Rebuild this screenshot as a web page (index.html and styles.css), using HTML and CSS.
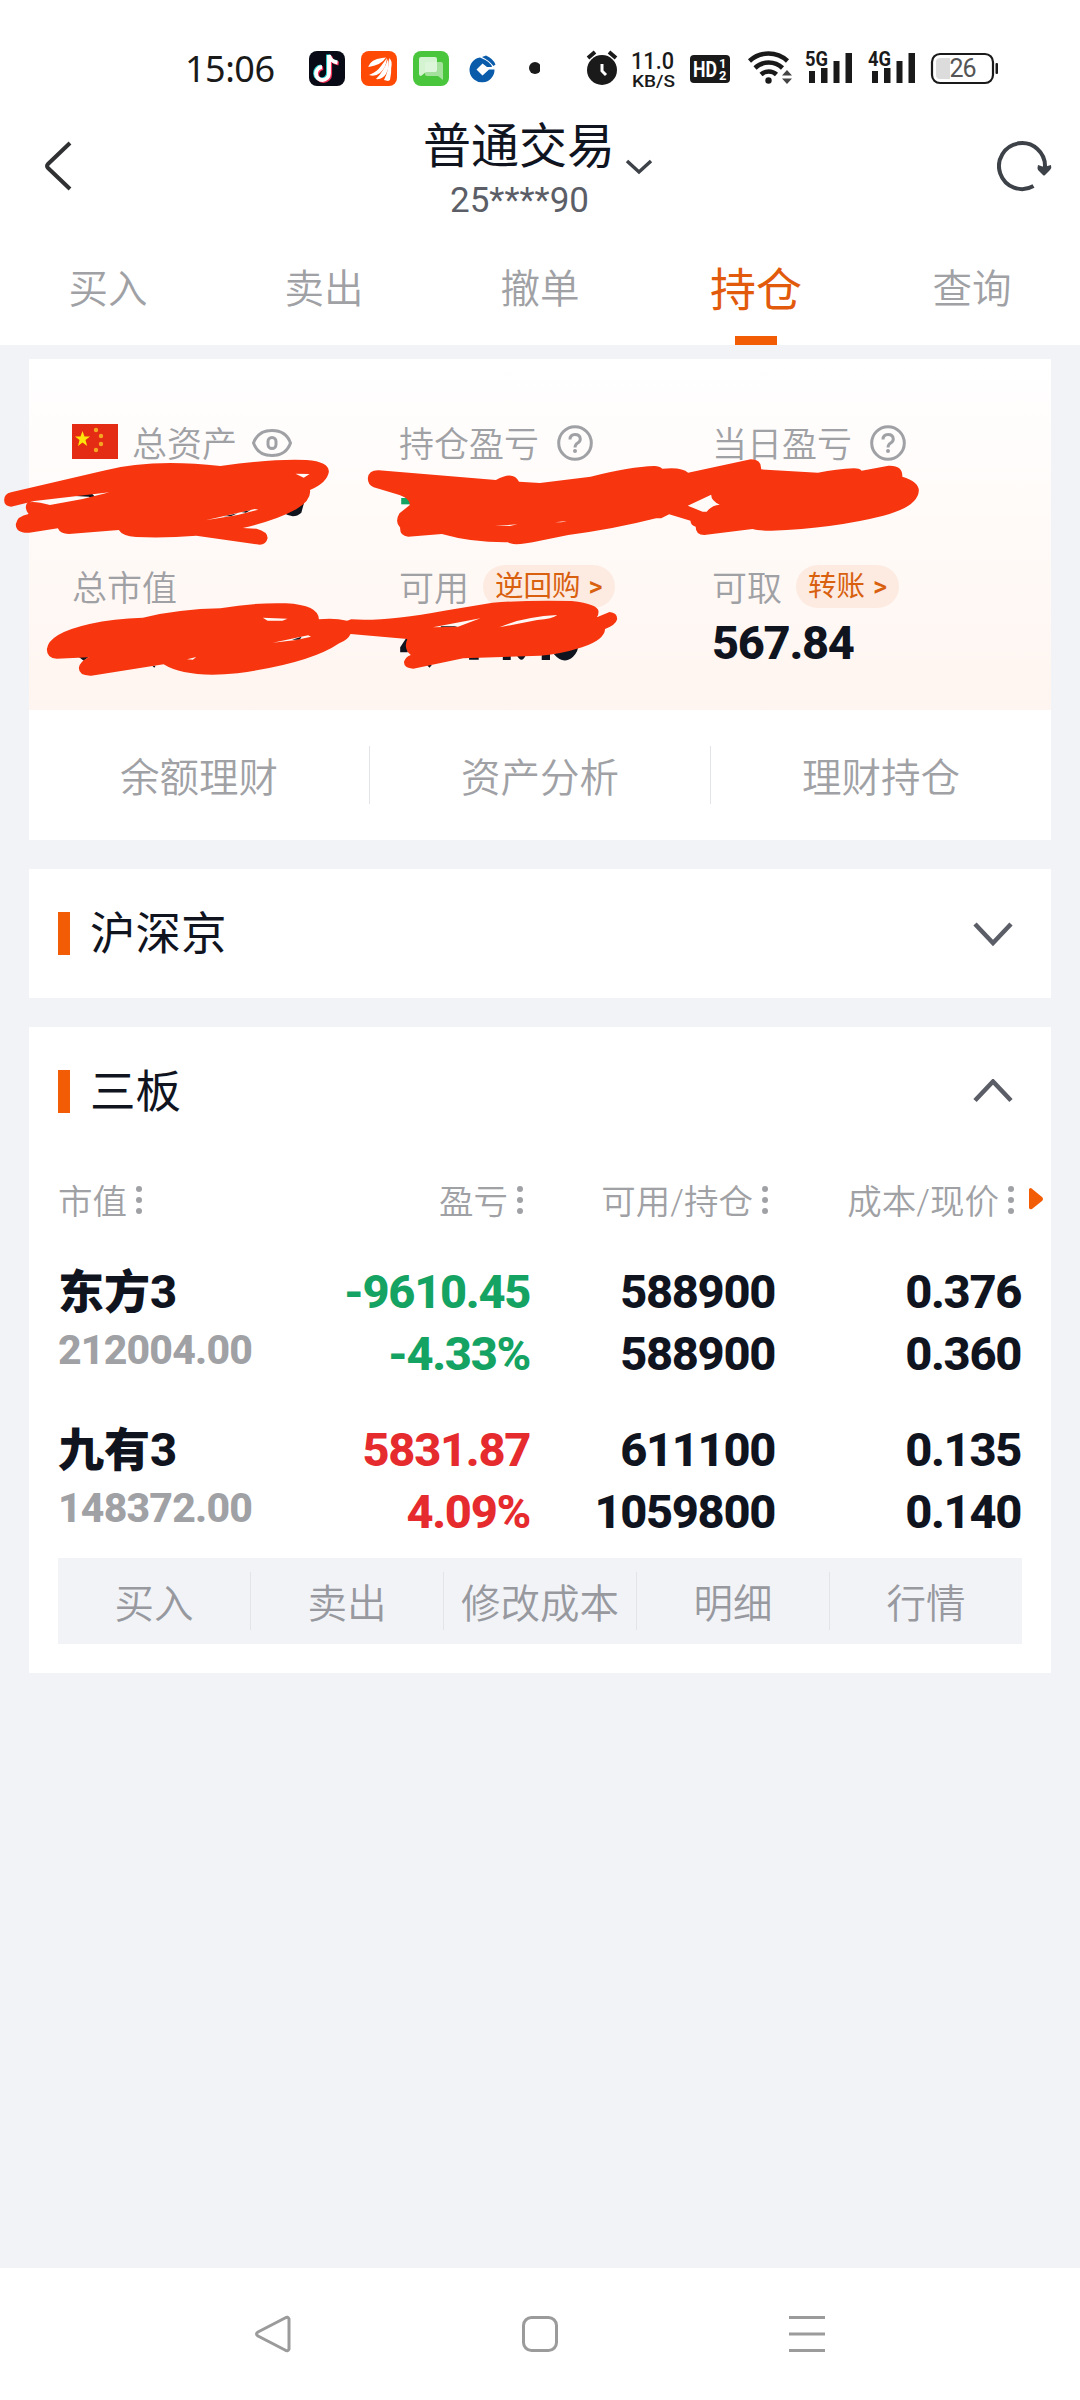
FILE: index.html
```html
<!DOCTYPE html>
<html lang="zh-CN">
<head>
    <meta charset="UTF-8">
    <meta name="viewport" content="width=device-width, initial-scale=1.0">
    <title>普通交易</title>
    <link rel="stylesheet" href="styles.css">
</head>
<body>
    <div class="screen">
        <div class="status-bar">
            <span class="time">15:06</span>
            <svg class="status-apps" width="240" height="50" viewBox="300 43 240 50">
                <rect x="309" y="51" width="36" height="35" rx="8" fill="#080a16"/>
                <g fill="none" stroke-width="3.800">
                    <path d="M329 55v18.500a6.500 6.500 0 1 1-7-6.500M329 55q1 6.500 8.500 7.500" stroke="#25d8dc" transform="translate(-1 -.5)"/>
                    <path d="M329 55v18.500a6.500 6.500 0 1 1-7-6.500M329 55q1 6.500 8.500 7.500" stroke="#f4325a" transform="translate(1.200 1)"/>
                    <path d="M329 55v18.500a6.500 6.500 0 1 1-7-6.500M329 55q1 6.500 8.500 7.500" stroke="#fff"/>
                </g>
                <rect x="361" y="51" width="36" height="35" rx="8" fill="#ff4a05"/>
                <g fill="#fff">
                    <path d="M368 67q3-8 14-9l4-.5q-5 8-18 9.500z"/>
                    <path d="M369 75q8-3 12-9 3-4 6-8-1 10-7 15-5 4-11 2z"/>
                    <path d="M376 79q8-8 12-20 2 8-2 15-4 6-10 5z"/>
                    <path d="M384 80q5-10 5-21 4 6 1 21l-2 1z"/>
                    <path d="M389 58q4 3 2 10l-1-1z"/>
                </g>
                <rect x="413" y="51" width="36" height="35" rx="8" fill="#4ac63c"/>
                <path d="M427 62h14q2 0 2 2v16l-5-4h-11q-2 0-2-2V64q0-2 2-2z" fill="#a4e19c"/>
                <path d="M421 57h14q2 0 2 2v11q0 2-2 2h-9l-5 4q-2 0-2-2V59q0-2 2-2z" fill="#e3f7e1" fill-opacity=".9"/>
                <path d="M480 57.500a12.500 12.500 0 1 0 14.500 12H489l-6.500 6-6-6 6-6 4.500 3.500h5q-1-5-12-9.500z" fill="#0a5cab"/>
                <path d="M482 57l4-1.500q7 3 9.500 9l-2 1.500q-5-6-11.500-9z" fill="#0a5cab"/>
                <circle cx="535" cy="68" r="6" fill="#1a1a1a"/>
            </svg>
            <svg class="status-icons" width="420" height="50" viewBox="580 43 420 50" fill="#1a1a1a">
                <circle cx="602" cy="70" r="15"/>
                <path d="M588 58l7-6M609 52l7 6" stroke="#1a1a1a" stroke-width="4"/>
                <path d="M602 64v7l4 4" fill="none" stroke="#fff" stroke-width="3"/>
                <text x="631" y="69" font-size="23" font-weight="500" textLength="43" lengthAdjust="spacingAndGlyphs">11.0</text>
                <text x="632" y="86.500" font-size="16.500" font-weight="500" textLength="43" lengthAdjust="spacingAndGlyphs">KB/S</text>
                <rect x="690" y="55" width="40" height="28" rx="4"/>
                <text x="693" y="77" font-size="22" font-weight="700" fill="#fff" textLength="24" lengthAdjust="spacingAndGlyphs">HD</text>
                <text x="719" y="68" font-size="13" font-weight="700" fill="#fff">1</text>
                <text x="719" y="80" font-size="13" font-weight="700" fill="#fff">2</text>
                <g fill="none" stroke="#1a1a1a" stroke-width="4.500">
                    <path d="M749.500 61a28 28 0 0 1 38 0M755 68a20 20 0 0 1 27.500 0M761 74.500a11.500 11.500 0 0 1 15.500 0"/>
                </g>
                <circle cx="768.500" cy="80.500" r="3.200"/>
                <path d="M782 75.500l5-5.500 5 5.500zM782 78.500l5 5.500 5-5.500z" fill="#444"/>
                <text x="805" y="66" font-size="21" font-weight="700" textLength="23" lengthAdjust="spacingAndGlyphs">5G</text>
                <path d="M809 71h6v12h-6zM821 68h6.500v15H821zM833.500 61h6v22h-6zM845.500 53h6.500v30h-6.500z"/>
                <text x="868" y="66" font-size="21" font-weight="700" textLength="23" lengthAdjust="spacingAndGlyphs">4G</text>
                <path d="M872 71h6v12h-6zM884 68h6.500v15H884zM896.500 61h6v22h-6zM908.500 53h6.500v30h-6.500z"/>
                <rect x="932" y="54" width="61" height="29" rx="8" fill="none" stroke="#1a1a1a" stroke-width="2.200"/>
                <path d="M950 58v21h-10q-4 0-4-4V62q0-4 4-4z" fill="#dcdcdc"/>
                <rect x="995.500" y="63" width="2.500" height="11" rx="1"/>
                <text x="949.500" y="77" font-size="25" fill="#555" textLength="27">26</text>
            </svg>
        </div>

        <header class="header">
            <svg class="back" width="30" height="52" viewBox="0 0 30 52">
                <path d="M27 3L5 24q-2 2 0 4l22 21" fill="none" stroke="#303133" stroke-width="4"/>
            </svg>
            <div class="account">
                <div class="account-name">
                    <span>普通交易</span>
                    <svg class="account-arrow" width="28" height="16" viewBox="0 0 28 16">
                        <path d="M2 2l12 11L26 2" fill="none" stroke="#3d4148" stroke-width="3.500"/>
                    </svg>
                </div>
                <div class="account-no">25****90</div>
            </div>
            <svg class="refresh" width="56" height="52" viewBox="0 0 56 52">
                <path d="M36.500 46A23 23 0 1 1 48 27" fill="none" stroke="#3d4148" stroke-width="4"/>
                <path d="M41 25l6 2 7-2q1 3-1 5l-5 5q-1 1-2 0l-5-5q-1-2 0-5z" fill="#3d4148"/>
            </svg>
        </header>

        <nav class="tabs">
            <div class="tab">买入</div>
            <div class="tab">卖出</div>
            <div class="tab">撤单</div>
            <div class="tab active">持仓</div>
            <div class="tab">查询</div>
        </nav>

        <main class="content">
            <section class="card assets">
                <div class="summary">
                    <div class="item">
                        <div class="label">
                            <svg class="flag" width="46" height="35" viewBox="0 0 46 35">
                                <rect width="46" height="35" fill="#e42c14"/>
                                <path d="M10.500 7l2 5.500h5.500l-4.500 3.500 1.700 6-4.700-3.500L6 22l1.500-6L3 12.500h5.500z" fill="#ffe60a"/>
                                <g fill="#f5a623"><circle cx="24" cy="6" r="2.200"/><circle cx="29" cy="12" r="2.200"/><circle cx="29" cy="20" r="2.200"/><circle cx="24" cy="26" r="2.200"/></g>
                            </svg>
                            <span>总资产</span>
                            <svg class="eye" width="42" height="30" viewBox="0 0 42 30" fill="none" stroke="#9fa1a5" stroke-width="3">
                                <path d="M2.500 15Q7 2.500 21 2.500T39.500 15Q35 27.500 21 27.500T2.500 15z"/>
                                <rect x="17" y="9.500" width="8" height="11" rx="4"/>
                            </svg>
                        </div>
                    </div>
                    <div class="item">
                        <div class="label">
                            <span>持仓盈亏</span>
                            <svg class="help" width="36" height="36" viewBox="0 0 36 36" fill="none" stroke="#9fa1a5" stroke-width="3">
                                <circle cx="18" cy="18" r="16.300"/>
                                <path d="M13 14.500q0-5 5-5t5.300 4.500q0 2.500-2.600 4T18 22.500"/>
                                <circle cx="18" cy="26" r="2" fill="#9fa1a5" stroke="none"/>
                            </svg>
                        </div>
                    </div>
                    <div class="item">
                        <div class="label">
                            <span>当日盈亏</span>
                            <svg class="help" width="36" height="36" viewBox="0 0 36 36" fill="none" stroke="#9fa1a5" stroke-width="3">
                                <circle cx="18" cy="18" r="16.300"/>
                                <path d="M13 14.500q0-5 5-5t5.300 4.500q0 2.500-2.600 4T18 22.500"/>
                                <circle cx="18" cy="26" r="2" fill="#9fa1a5" stroke="none"/>
                            </svg>
                        </div>
                    </div>
                    <div class="item">
                        <div class="label"><span>总市值</span></div>
                    </div>
                    <div class="item">
                        <div class="label"><span>可用</span><span class="pill">逆回购 <b>&gt;</b></span></div>
                    </div>
                    <div class="item">
                        <div class="label"><span>可取</span><span class="pill">转账 <b>&gt;</b></span></div>
                        <div class="value">567.84</div>
                    </div>
                </div>
                <div class="links">
                    <div class="link">余额理财</div>
                    <div class="link">资产分析</div>
                    <div class="link">理财持仓</div>
                </div>
            </section>

            <section class="card market">
                <div class="market-head">
                    <h2>沪深京</h2>
                    <svg width="40" height="26" viewBox="0 0 40 26"><path d="M2 3l18 19L38 3" fill="none" stroke="#5b5e66" stroke-width="4.500"/></svg>
                </div>
            </section>

            <section class="card market">
                <div class="market-head">
                    <h2>三板</h2>
                    <svg width="40" height="26" viewBox="0 0 40 26"><path d="M2 21.500L20 2.500l18 19" fill="none" stroke="#5b5e66" stroke-width="4.500"/></svg>
                </div>
                <div class="row columns">
                    <div class="col">市值<i class="dots"></i></div>
                    <div class="col">盈亏<i class="dots"></i></div>
                    <div class="col">可用/持仓<i class="dots"></i></div>
                    <div class="col">成本/现价<i class="dots"></i></div>
                    <svg class="more" width="16" height="24" viewBox="0 0 16 24"><path d="M1 2q1-1 2-1l11 9q2 2 0 4L4 22q-2 1-3-1z" fill="#f25c05"/></svg>
                </div>
                <div class="row stock">
                    <div class="cell"><div class="name">东方<span>3</span></div><div class="amount">212004.00</div></div>
                    <div class="cell down"><div>-9610.45</div><div>-4.33%</div></div>
                    <div class="cell"><div>588900</div><div>588900</div></div>
                    <div class="cell"><div>0.376</div><div>0.360</div></div>
                </div>
                <div class="row stock">
                    <div class="cell"><div class="name">九有<span>3</span></div><div class="amount">148372.00</div></div>
                    <div class="cell up"><div>5831.87</div><div>4.09%</div></div>
                    <div class="cell"><div>611100</div><div>1059800</div></div>
                    <div class="cell"><div>0.135</div><div>0.140</div></div>
                </div>
                <div class="actions">
                    <div class="action">买入</div>
                    <div class="action">卖出</div>
                    <div class="action">修改成本</div>
                    <div class="action">明细</div>
                    <div class="action">行情</div>
                </div>
            </section>
        </main>

        <footer class="nav-bar">
            <svg width="38" height="38" viewBox="0 0 38 38"><path d="M31 3q3-2 4 1v30q-1 3-4 1L4 21q-3-2 0-4z"/></svg>
            <svg width="38" height="38" viewBox="0 0 38 38"><rect x="2.500" y="2.500" width="33" height="33" rx="8"/></svg>
            <svg width="38" height="38" viewBox="0 0 38 38"><path d="M1 2.500h36M1 19h36M1 35.500h36"/></svg>
        </footer>

        <!-- marker strokes over the private amounts -->
        <svg class="marker" width="1080" height="300" viewBox="0 0 1080 300">
            <g transform="scale(.34439 .33333)">
                <g fill="#10141f">
                    <path d="M218 288q25-12 50-6l12 13-10 5-12-10z"/>
                    <path d="M825 340q28 18 50-2l8-30-40 15zM650 349l40-9-20 9zM700 336l28-6-14 8z"/>
                    <path d="M228 770h30l-15 12zM442 797l10 0-4 6zM848 719l28-9-6 9z"/>
                    <path d="M1280 679h48l-18 5h-30zM1162 757v-15l22-35v50zM1240 795h14l-7 8zM1362 765h28v14h-28zM1460 765h23v15h-23zM1500 765h27q-12 28-27 0zM1573 760h24v20h-24zM1608 762q28 34 56 8 16-15 16-40z"/>
                </g>
                <path d="M1165 294h30v19h-30z" fill="#14a362"/>
                <g fill="#f7350f" fill-rule="evenodd">
                    <path d="M12 300Q12 282 32 277L300 212Q440 175 640 198Q800 175 890 180Q955 185 955 215Q950 248 900 270Q905 300 860 328Q800 362 705 384L745 386Q778 395 777 415Q772 438 745 433L570 407Q480 415 395 411Q355 408 345 390L200 402Q175 402 168 385L85 398Q45 400 46 372Q50 348 83 342Q70 325 78 310Q92 300 145 315L240 297L318 277L100 303L32 320Q12 318 12 300z
                        M858 221L899 222L882 233zM597 361L740 327L750 329L690 345z"/>
                    <path d="M1068 235Q1070 210 1100 211L1440 240Q1490 210 1507 245L1568 249L1715 230Q1830 200 1900 198Q1915 198 1923 206Q1980 200 1998 218L2180 178Q2212 178 2210 208L2375 218Q2430 207 2480 205Q2495 205 2502 212L2580 197Q2622 195 2620 230Q2668 245 2668 272Q2665 320 2565 347Q2420 385 2240 392Q2200 392 2185 387L2045 405Q2020 405 2020 380Q2005 375 2005 362L1943 343L1920 355L1905 355Q1780 388 1650 405L1568 422Q1490 440 1475 427Q1370 428 1283 402L1185 410Q1160 408 1162 383Q1145 365 1160 340L1190 315Q1190 295 1160 285L1085 262Q1068 255 1068 235z
                        M1997 317L2065 284Q2065 302 2090 314Q2066 316 2052 335L2040 335zM1437 378L1503 373L1480 378zM1612 367L1645 363L1630 367z"/>
                    <path d="M136 748Q140 700 260 672Q330 655 415 653Q520 627 640 625Q740 607 830 610Q925 615 926 658Q970 653 1008 662L1020 658Q1120 665 1290 632L1430 608Q1530 600 1660 603Q1738 612 1738 635Q1738 645 1733 652L1770 636Q1793 638 1792 658Q1788 675 1757 687Q1755 720 1690 742Q1620 765 1568 767L1345 775L1200 806Q1172 805 1173 785Q1178 770 1193 765Q1170 745 1183 717L1018 702Q1010 720 985 730Q900 790 690 820Q540 835 475 793L265 827Q228 828 229 803Q232 785 258 772L165 776Q136 775 136 748z
                        M763 653L835 656L820 662L777 662zM792 728L895 706L903 710L860 720zM543 778L570 771L560 779zM1257 682L1395 655L1330 680zM1450 682Q1520 650 1618 645Q1605 657 1560 660z"/>
                </g>
            </g>
        </svg>
    </div>
</body>
</html>
```
FILE: styles.css
```css
* {
    box-sizing: border-box;
}
body {
    margin: 0;
    font-family: Roboto, "Noto Sans CJK SC", sans-serif;
    background: #f2f3f7;
    color: #10141f;
}
svg {
    display: block;
    flex: none;
}
.screen {
    position: relative;
    width: 1080px;
    height: 2400px;
    display: flex;
    flex-direction: column;
}

/* status bar */
.status-bar {
    display: flex;
    align-items: flex-start;
    height: 110px;
    padding: 44px 0 0 185px;
    background: #fff;
}
.time {
    width: 115px;
    font-family: "Noto Sans", sans-serif;
    font-size: 36px;
    line-height: 50px;
    letter-spacing: -0.5px;
    color: #1a1a1a;
}
.status-apps,
.status-icons {
    margin-top: -1px;
}
.status-icons {
    margin-left: 40px;
}

/* title */
.header {
    display: flex;
    align-items: flex-start;
    height: 130px;
    padding: 6px 27px 0 43px;
    background: #fff;
}
.back {
    margin-top: 24px;
}
.refresh {
    margin: 24px 0 0 auto;
}
.account {
    width: 240px;
    margin-left: 350px;
}
.account-name {
    display: flex;
    font-size: 48px;
    line-height: 62px;
}
.account-arrow {
    margin: 43px 0 0 10px;
}
.account-no {
    padding-left: 27px;
    font-size: 35px;
    line-height: 46px;
    color: #5b5e66;
}

/* tabs */
.tabs {
    display: flex;
    height: 105px;
    background: #fff;
}
.tab {
    flex: 1;
    display: flex;
    flex-direction: column;
    align-items: center;
    padding-top: 20px;
    font-size: 39.500px;
    line-height: 60px;
    color: #9fa1a5;
    font-weight: 350;
}
.tab.active {
    font-size: 46px;
    color: #e25a0c;
    font-weight: 400;
}
.tab.active::after {
    content: "";
    width: 42px;
    height: 9px;
    margin-top: 16px;
    background: #f25c05;
}

/* cards */
.content {
    flex: 1;
    display: flex;
    flex-direction: column;
    gap: 29px;
    padding: 14px 29px 0;
}
.card {
    background: #fff;
}
.summary {
    display: grid;
    grid-template-columns: 327px 313px 1fr;
    grid-template-rows: 144px 144px;
    height: 351px;
    padding: 62px 0 0 43px;
    background: linear-gradient(#fff, #fff5f0);
}
.label {
    display: flex;
    align-items: center;
    height: 44px;
    font-size: 35px;
    font-weight: 350;
    color: #9fa1a5;
}
.label > span:not(.pill) {
    margin-top: -4px;
}
.flag {
    margin: -4px 14px 0 0;
}
.eye {
    margin-left: 14px;
}
.help {
    margin-left: 18px;
}
.pill {
    height: 43px;
    margin: -2px 0 0 14px;
    padding: 0 12px;
    border-radius: 22px;
    background: #fdebe1;
    color: #d8600f;
    font-size: 28.500px;
    font-weight: 400;
    line-height: 44px;
    white-space: nowrap;
}
.pill b {
    margin-left: 1px;
    font-size: 27px;
    font-weight: 500;
}
.value {
    margin-top: 4px;
    font-size: 47px;
    font-weight: 800;
    line-height: 60px;
    letter-spacing: -1.300px;
}
.links {
    display: flex;
    height: 130px;
    padding: 36px 0;
}
.link {
    flex: 1;
    text-align: center;
    font-size: 39.500px;
    font-weight: 350;
    line-height: 65px;
    color: #9fa1a5;
}
.link + .link {
    border-left: 1px solid #e3e4e8;
}

/* holdings */
.market {
    padding: 0 29px;
}
.market-head {
    display: flex;
    align-items: center;
    justify-content: space-between;
    height: 129px;
    padding-right: 9px;
}
.market-head h2 {
    display: flex;
    align-items: center;
    margin: 0;
    font-size: 45.500px;
    font-weight: 400;
    line-height: 66px;
    padding-top: 3px;
}
.market-head h2::before {
    content: "";
    width: 12px;
    height: 43px;
    margin: -4px 20px 0 0;
    background: #f25c05;
}
.row {
    display: grid;
    grid-template-columns: 228px 244px 245px 246px;
}
.columns {
    position: relative;
    height: 105px;
    padding-top: 22px;
    font-size: 34.500px;
    font-weight: 350;
    line-height: 49px;
    color: #9fa1a5;
}
.col {
    display: flex;
    justify-content: flex-end;
    padding-right: 7px;
}
.col:first-child {
    justify-content: flex-start;
}
.dots {
    width: 6px;
    height: 6px;
    margin: 8px 0 0 9px;
    border-radius: 50%;
    background: #9fa1a5;
    box-shadow: 0 11px #9fa1a5, 0 22px #9fa1a5;
}
.more {
    position: absolute;
    right: -22px;
    top: 31px;
}
.stock {
    height: 158px;
}
.cell {
    text-align: right;
    font-size: 47px;
    font-weight: 800;
    line-height: 62px;
    letter-spacing: -1.300px;
}
.cell:first-child {
    text-align: left;
}
.name {
    font-size: 46px;
    letter-spacing: 0;
}
.name span {
    font-size: 47px;
}
.amount {
    font-size: 41px;
    line-height: 54px;
    letter-spacing: -0.800px;
    color: #9fa1a5;
}
.down {
    color: #14a362;
}
.up {
    color: #e62b2e;
}
.actions {
    display: flex;
    height: 86px;
    margin: -19px 0 29px;
    padding: 14px 0;
    background: #f2f3f7;
}
.action {
    flex: 1 0 0;
    text-align: center;
    white-space: nowrap;
    font-size: 39.500px;
    font-weight: 350;
    line-height: 65px;
    color: #97999f;
}
.action + .action {
    border-left: 1px solid #e3e4e8;
}

/* system navigation */
.nav-bar {
    display: flex;
    justify-content: space-between;
    height: 132px;
    padding: 47px 254px 0;
    background: #fff;
    fill: none;
    stroke: #9b9b9b;
    stroke-width: 3;
}

.marker {
    position: absolute;
    left: 0;
    top: 400px;
}
```
